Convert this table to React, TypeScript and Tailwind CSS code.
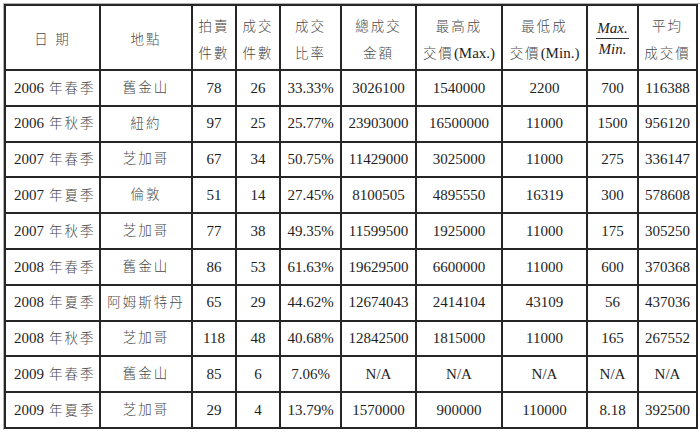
import React from "react";

const C = ({ children }: { children: React.ReactNode }) => (
  <span className="text-[13.5px] tracking-[2px] text-[#4a4a4a] font-light">{children}</span>
);

type Row = string[];

const rows: Row[] = [
  ["2006", "年春季", "舊金山", "78", "26", "33.33%", "3026100", "1540000", "2200", "700", "116388"],
  ["2006", "年秋季", "紐約", "97", "25", "25.77%", "23903000", "16500000", "11000", "1500", "956120"],
  ["2007", "年春季", "芝加哥", "67", "34", "50.75%", "11429000", "3025000", "11000", "275", "336147"],
  ["2007", "年夏季", "倫敦", "51", "14", "27.45%", "8100505", "4895550", "16319", "300", "578608"],
  ["2007", "年秋季", "芝加哥", "77", "38", "49.35%", "11599500", "1925000", "11000", "175", "305250"],
  ["2008", "年春季", "舊金山", "86", "53", "61.63%", "19629500", "6600000", "11000", "600", "370368"],
  ["2008", "年夏季", "阿姆斯特丹", "65", "29", "44.62%", "12674043", "2414104", "43109", "56", "437036"],
  ["2008", "年秋季", "芝加哥", "118", "48", "40.68%", "12842500", "1815000", "11000", "165", "267552"],
  ["2009", "年春季", "舊金山", "85", "6", "7.06%", "N/A", "N/A", "N/A", "N/A", "N/A"],
  ["2009", "年夏季", "芝加哥", "29", "4", "13.79%", "1570000", "900000", "110000", "8.18", "392500"],
];

const cell = "bg-white flex items-center justify-center text-[15px] text-[#1e1e1e] whitespace-nowrap";
const head = "bg-white flex flex-col items-center justify-center pt-[4px] leading-[27px] text-[15px] text-[#1e1e1e] whitespace-nowrap";

export default function App() {
  return (
    <div
      className="w-[700px] h-[433px] bg-white pt-[3px] pl-[3px]"
      style={{ fontFamily: '"Liberation Serif", "Noto Sans CJK TC", serif' }}
    >
      <div className="w-[697px] h-[427px] border border-[#b4b4b4] border-r-0 border-b-0">
        <div className="w-[694px] h-[425px] bg-[#262626] p-[2px] grid gap-[2px] grid-cols-[93px_90px_42px_42px_59px_73px_84px_83px_49px_57px] grid-rows-[63px_repeat(10,minmax(0,1fr))]">
          <div className={head}><C>日 期</C></div>
          <div className={head}><C>地點</C></div>
          <div className={head}><C>拍賣</C><C>件數</C></div>
          <div className={head}><C>成交</C><C>件數</C></div>
          <div className={head}><C>成交</C><C>比率</C></div>
          <div className={head}><C>總成交</C><C>金額</C></div>
          <div className={head}>
            <C>最高成</C>
            <span><C>交價</C>(Max.)</span>
          </div>
          <div className={head}>
            <C>最低成</C>
            <span><C>交價</C>(Min.)</span>
          </div>
          <div className="bg-white flex flex-col items-center justify-center pt-[2px] text-[15px] text-[#1e1e1e] italic">
            <span className="leading-[15px] pb-[2px] border-b border-[#333] px-[1px]">Max.</span>
            <span className="leading-[15px] pt-[3px]">Min.</span>
          </div>
          <div className={head}><C>平均</C><C>成交價</C></div>

          {rows.map((r, i) => (
            <React.Fragment key={i}>
              <div className="bg-white flex items-center pl-[8px] text-[15px] text-[#1e1e1e] whitespace-nowrap">
                <span>{r[0]}</span>
                <span className="ml-[5px]"><C>{r[1]}</C></span>
              </div>
              <div className={cell}><C>{r[2]}</C></div>
              {r.slice(3).map((v, j) => (
                <div key={j} className={cell}>{v}</div>
              ))}
            </React.Fragment>
          ))}
        </div>
      </div>
    </div>
  );
}
